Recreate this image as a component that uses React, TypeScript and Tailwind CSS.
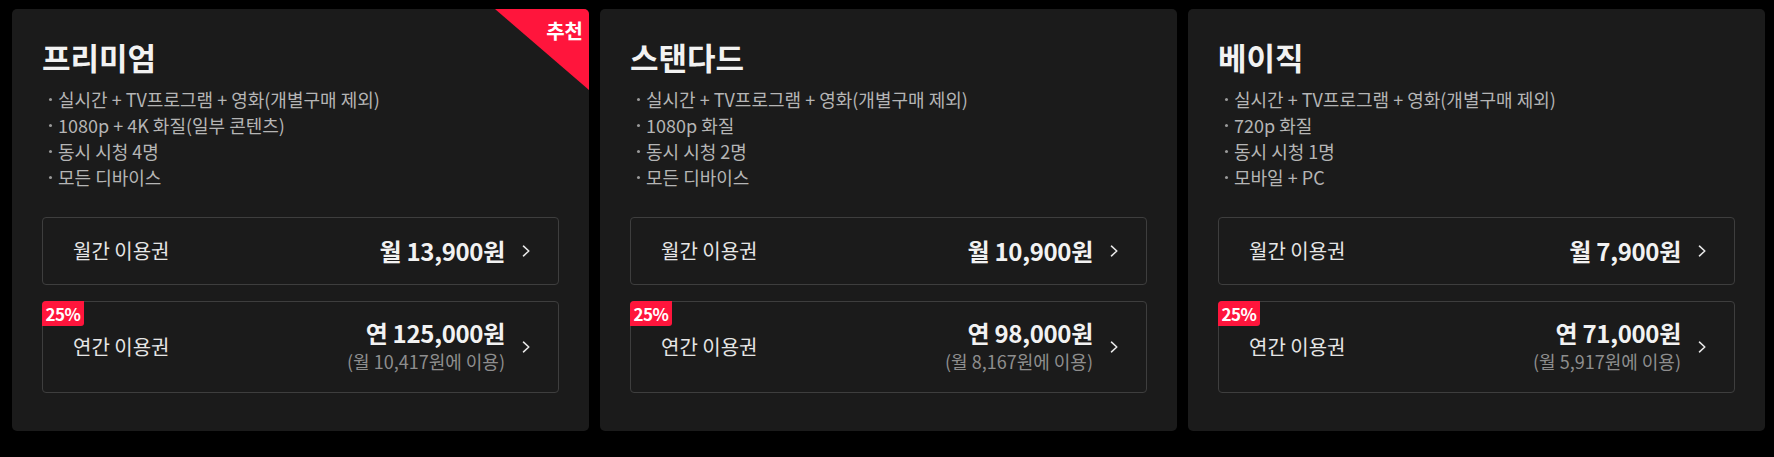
import React from "react";

type Plan = {
  name: string;
  features: string[];
  monthly: string;
  yearly: string;
  yearlyPerMonth: string;
  recommended?: boolean;
};

const plans: Plan[] = [
  {
    name: "프리미엄",
    features: ["실시간 + TV프로그램 + 영화(개별구매 제외)", "1080p + 4K 화질(일부 콘텐츠)", "동시 시청 4명", "모든 디바이스"],
    monthly: "월 13,900원",
    yearly: "연 125,000원",
    yearlyPerMonth: "(월 10,417원에 이용)",
    recommended: true,
  },
  {
    name: "스탠다드",
    features: ["실시간 + TV프로그램 + 영화(개별구매 제외)", "1080p 화질", "동시 시청 2명", "모든 디바이스"],
    monthly: "월 10,900원",
    yearly: "연 98,000원",
    yearlyPerMonth: "(월 8,167원에 이용)",
  },
  {
    name: "베이직",
    features: ["실시간 + TV프로그램 + 영화(개별구매 제외)", "720p 화질", "동시 시청 1명", "모바일 + PC"],
    monthly: "월 7,900원",
    yearly: "연 71,000원",
    yearlyPerMonth: "(월 5,917원에 이용)",
  },
];

function Chevron() {
  return (
    <svg width="9" height="12" viewBox="0 0 9 12" fill="none" className="flex-shrink-0">
      <path d="M1.5 1.2 L6.8 6 L1.5 10.8" stroke="#e6e6e6" strokeWidth="1.6" strokeLinecap="round" strokeLinejoin="round" />
    </svg>
  );
}

function PlanCard({ plan }: { plan: Plan }) {
  return (
    <div className="relative flex-1 rounded-[5px] bg-[#1b1b1b] px-[30px] pt-[29px] pb-[38px] overflow-hidden">
      {plan.recommended && (
        <div className="absolute top-0 right-0 w-[94px] h-[81px] bg-[#ff153c] [clip-path:polygon(0_0,100%_0,100%_100%)]">
          <span className="absolute top-[8px] right-[6px] text-[20px] leading-[28px] font-bold text-white">추천</span>
        </div>
      )}
      <h2 className="text-[31px] leading-[38px] font-bold text-[#f2f2f2]">{plan.name}</h2>
      <ul className="mt-[10px] text-[18px] leading-[26px] text-[#b5b5b5]">
        {plan.features.map((f) => (
          <li key={f} className="flex items-center">
            <span className="ml-[7px] mr-[6px] w-[3px] h-[3px] rounded-full bg-[#9a9a9a] flex-shrink-0" />
            <span>{f}</span>
          </li>
        ))}
      </ul>

      <button className="mt-[27px] flex items-center w-full h-[68px] rounded-[4px] border border-[#3e3e3e] pl-[30px] pr-[27px] text-left">
        <span className="flex-1 text-[20px] text-[#e6e6e6]">월간 이용권</span>
        <span className="text-[24px] font-bold text-[#f2f2f2] tracking-[-0.3px]">{plan.monthly}</span>
        <span className="ml-[17px]"><Chevron /></span>
      </button>

      <button className="relative mt-[16px] flex items-center w-full h-[92px] rounded-[4px] border border-[#3e3e3e] pl-[30px] pr-[27px] text-left">
        <span className="absolute -top-px -left-px w-[42px] h-[25px] rounded-tl-[4px] rounded-br-[3px] bg-[#ff153c] text-white text-[17px] leading-[25px] font-bold text-center tracking-[-0.5px]">
          25%
        </span>
        <span className="flex-1 text-[20px] text-[#e6e6e6]">연간 이용권</span>
        <span className="flex flex-col items-end">
          <span className="text-[24px] leading-[29px] font-bold text-[#f2f2f2] tracking-[-0.3px]">{plan.yearly}</span>
          <span className="text-[18px] leading-[29px] text-[#8e8e8e]">{plan.yearlyPerMonth}</span>
        </span>
        <span className="ml-[17px]"><Chevron /></span>
      </button>
    </div>
  );
}

export default function App() {
  return (
    <div
      className="w-[1774px] h-[457px] bg-black flex gap-[11px] pl-[12px] pr-[9px] pt-[9px] items-start"
      style={{ fontFamily: '"Noto Sans CJK KR", "Noto Sans", sans-serif' }}
    >
      {plans.map((p) => (
        <PlanCard key={p.name} plan={p} />
      ))}
    </div>
  );
}
